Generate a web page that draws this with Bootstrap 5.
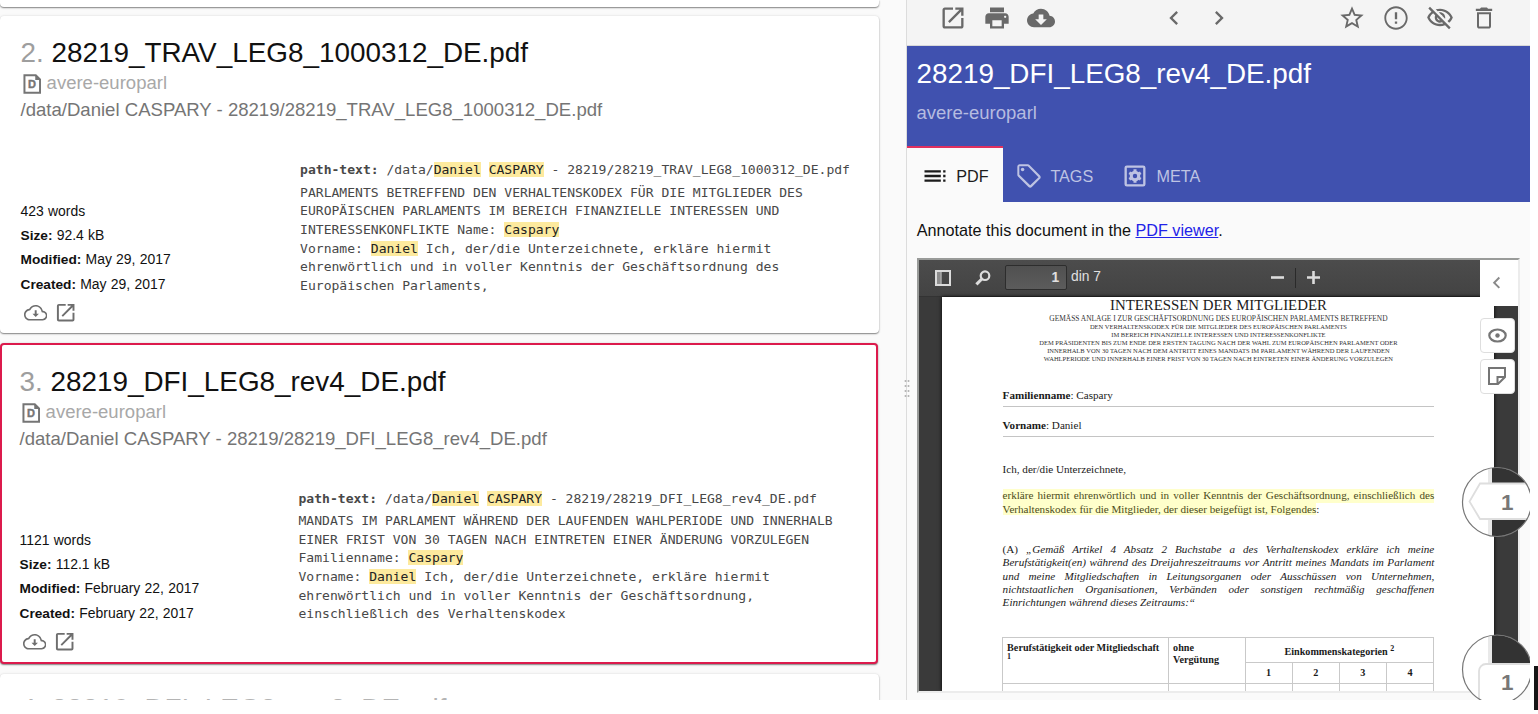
<!DOCTYPE html>
<html lang="en">
<head>
<meta charset="utf-8">
<title>28219_DFI_LEG8_rev4_DE.pdf</title>
<link href="https://cdn.jsdelivr.net/npm/bootstrap@5.3.0/dist/css/bootstrap.min.css" rel="stylesheet">
<style>
body{margin:0;background:#fff;color:#111;font-family:"Liberation Sans",Arial,sans-serif;overflow:hidden;height:714px}
.app{width:1530px;height:700px;background:#fafafa}
.ico{width:28px;height:28px;fill:currentColor;flex:none;display:block}
.ico-sm{width:23.4px;height:23.4px}
/* results */
.results{width:905.5px;height:700px}
.result{width:878.5px;border:0;border-radius:4px;background:#fff;box-shadow:0 1px 1.5px rgba(0,0,0,.45),0 0 3px rgba(0,0,0,.1);padding:20.7px 0 0 20.5px;flex:none}
.result.r-first{height:6.5px;padding:0;border-radius:0 0 4px 4px}
.result.r-second{margin-top:9.5px;height:316.5px}
.result.r-third{margin-top:10.5px;width:878px;height:321px;border:2px solid #dc1a4c;padding:20.5px 0 0 17.5px}
.result.r-fourth{margin-top:9.5px;height:80px;padding-top:19.5px}
.r-title{font-size:27.86px;line-height:32px;margin:0;font-weight:400;color:#111;white-space:nowrap}
.r-title .num{color:#9e9e9e;display:inline-block;width:31px}
.r-fourth .r-title,.r-fourth .r-title .num{color:#b4b4b4}
.r-coll{font-size:18.53px;line-height:27px;color:#a8a8a8;gap:5.6px}
.r-coll svg{margin-left:2px}
.r-path{font-size:18.57px;line-height:27px;color:#757575;white-space:nowrap}
.r-meta{width:279.6px;padding-top:76px;font-size:13.95px;line-height:24.4px}
.r-meta .line{height:24.4px;word-spacing:.35px;white-space:nowrap}
.r-meta b{font-size:13.7px}
.r-icons{color:#6e6e6e;padding:5.2px 0 0 3.3px;gap:6.9px}
.r-snip{padding-top:37.6px;font:13.05px/18.6px "DejaVu Sans Mono",monospace;color:#484848;white-space:nowrap}
.r-snip .first{line-height:19px;margin-bottom:4.5px}
.r-snip mark{padding:0;background:#fdea9e;color:#222}
.r-third .r-meta{width:279px}
.r-third .r-snip{padding-top:37.2px}
/* splitter */
.splitter{width:1.5px;background:#dcdcdc;position:relative}
.splitter svg{position:absolute;left:-2px;top:379px}
/* preview */
.tools{height:45.5px;background:#f4f4f4;color:#696969;padding:0 31.6px 9px;border-bottom:1px solid #d8d8d8}
.tools>div{gap:16.3px}
.doc-head{height:156.5px;background:#4051af;color:#fff}
.doc-head h2{font-size:27.83px;line-height:32px;margin:0;padding:12.6px 0 0 9.5px;font-weight:400}
.doc-head .sub{font-size:18.53px;line-height:28px;padding:9.2px 0 0 9.5px;color:#b6bce0;height:55.6px}
.tabs .tab{height:56.3px;font-size:16.2px;color:#bec3e3;gap:7.2px;padding-bottom:0;padding-top:4px}
.tabs .active{width:96.2px;background:#fafafa;border-top:2px solid #e0305f;color:#1c1c1c;padding-left:14px;padding-top:2px}
.note{font-size:16.19px;line-height:24px;padding:16.4px 0 0 9.8px;height:55.7px;white-space:nowrap}
.note a{color:#2222e8;text-decoration:underline}
.frame{margin-left:9.6px;width:603px;height:435px;border:2px solid;border-color:#999b99 #ececec #ececec #999b99;background:#3a3a3a;position:relative;overflow:hidden}
.vbar{height:37px;background:linear-gradient(#4c4c4c,#434343);border-bottom:1px solid #333;color:#e0e0e0;font-size:13.8px}
.vbar .pg{width:62px;height:25px;border:1px solid #2d2d2d;border-radius:2px;background:linear-gradient(#505050,#5c5c5c);margin-left:14.5px;padding-right:7px;font-weight:700;line-height:23px;text-align:right}
.vbar .sep{width:1px;height:20px;background:#2a2a2a}
.paper{margin-left:23px;width:552.7px;height:394px;background:#fff;padding:0 60px 0 61px;font-family:"Liberation Serif",serif;color:#1a1a1a;font-size:11.12px;line-height:13.4px;box-shadow:0 0 4px #000;overflow:hidden}
.paper .heading{font-size:14.85px;line-height:16px;padding-top:.4px}
.paper .caps{font-size:6.5px;line-height:7.92px;color:#333;white-space:nowrap}
.paper .caps .big{font-size:7.43px}
.ruled{border-bottom:1.5px solid #c4c4c4}
.spread{text-align-last:justify;white-space:nowrap}
.hl{background:#ffffcb;color:#4c4c20}
.grid-t{width:432px;margin:27px 0 0 -.5px;border-collapse:collapse;font-size:10.17px;line-height:12px;font-weight:700;table-layout:fixed}
.grid-t td{border:1px solid #c9c9c9;padding:4px 4px 0;vertical-align:top}
.grid-t sup{font-size:8px;line-height:0}
.side-tab{position:absolute;left:561px;top:0;width:38px;height:46px;background:#fff;color:#8a8a8a;padding-right:3px}
.side-btn{position:absolute;left:561px;width:35px;height:35px;background:#fff;border:1px solid #dedede;border-radius:4px;color:#757575}
.bucket{position:absolute;left:1460px;width:70px}
.edge{position:absolute;left:1534px;top:666px;width:4px;height:44px;background:#161616}
</style>
</head>
<body>
<svg width="0" height="0" class="position-absolute">
<symbol id="open" viewBox="0 0 24 24"><path d="M19 19H5V5h7V3H5c-1.11 0-2 .9-2 2v14c0 1.1.89 2 2 2h14c1.1 0 2-.9 2-2v-7h-2v7zM14 3v2h3.59l-9.83 9.83 1.41 1.41L19 6.41V10h2V3h-7z"/></symbol>
<symbol id="cloud" viewBox="0 0 24 24"><path d="M19.35 10.04C18.67 6.59 15.64 4 12 4 9.11 4 6.6 5.64 5.35 8.04 2.34 8.36 0 10.91 0 14c0 3.31 2.69 6 6 6h13c2.76 0 5-2.24 5-5 0-2.64-2.05-4.78-4.65-4.96zM17 13l-5 5-5-5h3V9h4v4h3z"/></symbol>
<symbol id="cloud-o" viewBox="0 0 24 24"><path fill-rule="evenodd" d="M19.35 10.04C18.67 6.59 15.64 4 12 4 9.11 4 6.6 5.64 5.35 8.04 2.34 8.36 0 10.91 0 14c0 3.31 2.69 6 6 6h13c2.76 0 5-2.24 5-5 0-2.64-2.05-4.78-4.65-4.96zM19 18.400H6c-2.400 0-4.400-1.900-4.400-4.400 0-2.200 1.600-4 3.900-4.300l.9-.1.5-.95C7.900 6.900 9.900 5.600 12 5.600c2.800 0 5.200 2 5.800 4.700l.3 1.300 1.300.1c1.700.1 3 1.500 3 3.300 0 1.900-1.500 3.400-3.400 3.400z"/><path d="M13 9.500h-2v3.500H8.700L12 16.500l3.300-3.500H13z"/></symbol>
<symbol id="print" viewBox="0 0 24 24"><path d="M19 8H5c-1.660 0-3 1.340-3 3v6h4v4h12v-4h4v-6c0-1.660-1.340-3-3-3zm-3 11H8v-5h8v5zm3-7c-.55 0-1-.45-1-1s.45-1 1-1 1 .45 1 1-.45 1-1 1zm-1-9H6v4h12V3z"/></symbol>
<symbol id="left" viewBox="0 0 24 24"><path d="M15.410 7.410L14 6l-6 6 6 6 1.410-1.410L10.830 12z"/></symbol>
<symbol id="right" viewBox="0 0 24 24"><path d="M10 6L8.590 7.410 13.170 12l-4.580 4.590L10 18l6-6z"/></symbol>
<symbol id="file-d" viewBox="0 0 18 20"><path d="M1.200 1.200H12.500L16.800 5.500V18.800H1.200Z" fill="none" stroke="currentColor" stroke-width="2"/><path d="M12 1v5h5z"/><text x="4.700" y="14" font-family="Liberation Sans" font-weight="700" font-size="11" stroke="currentColor" stroke-width=".4">D</text></symbol>
</svg>

<div class="app d-flex overflow-hidden position-relative">
  <section class="results d-flex flex-column overflow-hidden">
    <article class="result r-first"></article>

    <article class="result r-second">
      <h2 class="r-title"><span class="num">2.</span>28219_TRAV_LEG8_1000312_DE.pdf</h2>
      <div class="r-coll d-flex align-items-center"><svg class="mt-1" width="18.500" height="20" fill="currentColor" color="#757575"><use href="#file-d"/></svg>avere-europarl</div>
      <div class="r-path">/data/Daniel CASPARY - 28219/28219_TRAV_LEG8_1000312_DE.pdf</div>
      <div class="d-flex">
        <div class="r-meta">
          <div class="line">423 words</div>
          <div class="line"><b>Size:</b> 92.4 kB</div>
          <div class="line"><b>Modified:</b> May 29, 2017</div>
          <div class="line"><b>Created:</b> May 29, 2017</div>
          <div class="r-icons d-flex"><svg class="ico ico-sm"><use href="#cloud-o"/></svg><svg class="ico ico-sm"><use href="#open"/></svg></div>
        </div>
        <div class="r-snip">
          <div class="first"><b>path-text:</b> /data/<mark>Daniel</mark> <mark>CASPARY</mark> - 28219/28219_TRAV_LEG8_1000312_DE.pdf</div>
          <div>PARLAMENTS BETREFFEND DEN VERHALTENSKODEX FÜR DIE MITGLIEDER DES</div>
          <div>EUROPÄISCHEN PARLAMENTS IM BEREICH FINANZIELLE INTERESSEN UND</div>
          <div>INTERESSENKONFLIKTE Name: <mark>Caspary</mark></div>
          <div>Vorname: <mark>Daniel</mark> Ich, der/die Unterzeichnete, erkläre hiermit</div>
          <div>ehrenwörtlich und in voller Kenntnis der Geschäftsordnung des</div>
          <div>Europäischen Parlaments,</div>
        </div>
      </div>
    </article>

    <article class="result r-third">
      <h2 class="r-title"><span class="num">3.</span>28219_DFI_LEG8_rev4_DE.pdf</h2>
      <div class="r-coll d-flex align-items-center"><svg class="mt-1" width="18.500" height="20" fill="currentColor" color="#757575"><use href="#file-d"/></svg>avere-europarl</div>
      <div class="r-path">/data/Daniel CASPARY - 28219/28219_DFI_LEG8_rev4_DE.pdf</div>
      <div class="d-flex">
        <div class="r-meta">
          <div class="line">1121 words</div>
          <div class="line"><b>Size:</b> 112.1 kB</div>
          <div class="line"><b>Modified:</b> February 22, 2017</div>
          <div class="line"><b>Created:</b> February 22, 2017</div>
          <div class="r-icons d-flex"><svg class="ico ico-sm"><use href="#cloud-o"/></svg><svg class="ico ico-sm"><use href="#open"/></svg></div>
        </div>
        <div class="r-snip">
          <div class="first"><b>path-text:</b> /data/<mark>Daniel</mark> <mark>CASPARY</mark> - 28219/28219_DFI_LEG8_rev4_DE.pdf</div>
          <div>MANDATS IM PARLAMENT WÄHREND DER LAUFENDEN WAHLPERIODE UND INNERHALB</div>
          <div>EINER FRIST VON 30 TAGEN NACH EINTRETEN EINER ÄNDERUNG VORZULEGEN</div>
          <div>Familienname: <mark>Caspary</mark></div>
          <div>Vorname: <mark>Daniel</mark> Ich, der/die Unterzeichnete, erkläre hiermit</div>
          <div>ehrenwörtlich und in voller Kenntnis der Geschäftsordnung,</div>
          <div>einschließlich des Verhaltenskodex</div>
        </div>
      </div>
    </article>

    <article class="result r-fourth">
      <h2 class="r-title"><span class="num">4.</span>28219_DFI_LEG8_rev3_DE.pdf</h2>
    </article>
  </section>

  <div class="splitter"><svg width="6" height="20" fill="#b0b0b0"><g id="dots"><circle cx="1.500" cy="2" r="1"/><circle cx="1.500" cy="7" r="1"/><circle cx="1.500" cy="12" r="1"/><circle cx="1.500" cy="17" r="1"/></g><use href="#dots" x="3"/></svg></div>

  <section class="flex-grow-1">
    <div class="tools d-flex justify-content-between align-items-center">
      <div class="d-flex"><svg class="ico"><use href="#open"/></svg><svg class="ico"><use href="#print"/></svg><svg class="ico"><use href="#cloud"/></svg></div>
      <div class="d-flex"><svg class="ico"><use href="#left"/></svg><svg class="ico"><use href="#right"/></svg></div>
      <div class="d-flex">
        <svg class="ico" viewBox="0 0 24 24"><path d="M22 9.240l-7.190-.62L12 2 9.190 8.630 2 9.240l5.460 4.730L5.820 21 12 17.270 18.180 21l-1.630-7.030L22 9.240zM12 15.400l-3.760 2.270 1-4.280-3.320-2.880 4.380-.38L12 6.100l1.710 4.040 4.380.38-3.320 2.880 1 4.280L12 15.400z"/></svg>
        <svg class="ico" viewBox="0 0 24 24"><path d="M11 15h2v2h-2zm0-8h2v6h-2zm.99-5C6.470 2 2 6.480 2 12s4.470 10 9.990 10C17.520 22 22 17.520 22 12S17.520 2 11.990 2zM12 20.400c-4.600 0-8.400-3.800-8.400-8.400s3.800-8.400 8.400-8.400 8.400 3.800 8.400 8.400-3.800 8.400-8.400 8.400z"/></svg>
        <svg class="ico" viewBox="0 0 24 24"><path d="M12 6c3.790 0 7.170 2.130 8.820 5.500-.59 1.220-1.420 2.270-2.410 3.120l1.410 1.410c1.390-1.230 2.490-2.770 3.180-4.530C21.270 7.110 17 4 12 4c-1.270 0-2.490.2-3.640.57l1.650 1.650C10.660 6.090 11.320 6 12 6zm-1.070 1.140L13 9.210c.57.25 1.030.71 1.280 1.280l2.070 2.070c.08-.34.14-.7.14-1.070C16.500 9.010 14.480 7 12 7c-.37 0-.72.05-1.070.14zM2.010 3.870l2.680 2.680C3.060 7.830 1.770 9.530 1 11.500 2.730 15.890 7 19 12 19c1.520 0 2.980-.29 4.320-.82l3.420 3.420 1.410-1.410L3.420 2.450 2.010 3.870zm7.500 7.500l2.610 2.610c-.04.01-.08.02-.12.02-1.380 0-2.500-1.120-2.500-2.500 0-.05.01-.08.01-.13zm-3.400-3.400l1.750 1.750c-.23.55-.36 1.150-.36 1.780 0 2.480 2.020 4.500 4.500 4.500.63 0 1.230-.13 1.770-.36l.98.98c-.88.24-1.800.38-2.750.38-3.790 0-7.170-2.130-8.820-5.500.7-1.430 1.720-2.610 2.930-3.530z"/></svg>
        <svg class="ico" viewBox="0 0 24 24"><path d="M6 19c0 1.100.9 2 2 2h8c1.100 0 2-.9 2-2V7H6v12zM7.700 8.700h8.600v10.600H7.700V8.700zm7.800-4.700l-1-1h-5l-1 1H5v2h14V4z"/></svg>
      </div>
    </div>

    <header class="doc-head">
      <h2>28219_DFI_LEG8_rev4_DE.pdf</h2>
      <div class="sub">avere-europarl</div>
      <nav class="tabs d-flex">
        <div class="tab active d-flex align-items-center"><svg class="ico" viewBox="0 0 24 24"><path d="M3 9h14V7H3v2zm0 4h14v-2H3v2zm0 4h14v-2H3v2zm16 0h2v-2h-2v2zm0-10v2h2V7h-2zm0 6h2v-2h-2v2z"/></svg>PDF</div>
        <div class="tab d-flex align-items-center ms-1 ps-2"><svg class="ico" viewBox="0 0 24 24"><path d="M21.410 11.580l-9-9C12.050 2.220 11.550 2 11 2H4c-1.100 0-2 .9-2 2v7c0 .55.22 1.050.59 1.420l9 9c.36.36.86.58 1.410.58s1.050-.22 1.410-.59l7-7c.37-.36.59-.86.59-1.410s-.23-1.060-.59-1.420zM13 20.010L3.700 11V3.700h7.300l9.200 9.300-7.200 7.010z"/><circle cx="6.500" cy="6.500" r="1.500"/></svg>TAGS</div>
        <div class="tab d-flex align-items-center ms-4 ps-1"><svg class="ico" viewBox="0 0 24 24"><rect x="4" y="4" width="16" height="16" rx="1" fill="none" stroke="currentColor" stroke-width="2"/><circle cx="12" cy="12" r="3.200" fill="none" stroke="currentColor" stroke-width="2.600"/><path d="M12 6.300V8.300M12 15.700V17.700M7.100 9.200L8.800 10.200M15.200 13.800L16.900 14.800M7.100 14.800L8.800 13.800M15.200 10.200L16.900 9.200" stroke="currentColor" stroke-width="2.600"/></svg>META</div>
      </nav>
    </header>

    <div class="note">Annotate this document in the <a href="#">PDF viewer</a>.</div>

    <div class="frame">
      <div class="vbar d-flex align-items-center">
        <svg width="16" height="16" class="ms-3 flex-shrink-0" style="margin-right:24px"><rect x="1" y="1" width="14" height="14" fill="none" stroke="#dcdcdc" stroke-width="2"/><rect x="2" y="2" width="3.500" height="12" fill="#8d8d8d"/><path d="M6 1v14" stroke="#dcdcdc" stroke-width="1"/></svg>
        <svg width="16" height="16" class="flex-shrink-0" fill="none" stroke="#dcdcdc"><circle cx="10" cy="5.700" r="4.300" stroke-width="2.200"/><path d="M6.800 9L1.400 14.400" stroke-width="3"/></svg>
        <div class="pg">1</div>
        <div class="ps-1">din 7</div>
        <div class="d-flex align-items-center" style="margin-left:170px;gap:11px">
          <svg width="13" height="13"><path d="M0 6.500H13" stroke="#dcdcdc" stroke-width="2.600"/></svg>
          <span class="sep"></span>
          <svg width="13" height="13"><path d="M0 6.500H13M6.500 0V13" stroke="#dcdcdc" stroke-width="2.600"/></svg>
        </div>
      </div>

      <div class="paper">
        <div class="heading text-center">INTERESSEN DER MITGLIEDER</div>
        <div class="caps text-center" style="margin-top:2px">
          <div class="big">GEMÄSS ANLAGE I ZUR GESCHÄFTSORDNUNG DES EUROPÄISCHEN PARLAMENTS BETREFFEND</div>
          <div>DEN VERHALTENSKODEX FÜR DIE MITGLIEDER DES EUROPÄISCHEN PARLAMENTS</div>
          <div>IM BEREICH FINANZIELLE INTERESSEN UND INTERESSENKONFLIKTE</div>
          <div>DEM PRÄSIDENTEN BIS ZUM ENDE DER ERSTEN TAGUNG NACH DER WAHL ZUM EUROPÄISCHEN PARLAMENT ODER</div>
          <div>INNERHALB VON 30 TAGEN NACH DEM ANTRITT EINES MANDATS IM PARLAMENT WÄHREND DER LAUFENDEN</div>
          <div>WAHLPERIODE UND INNERHALB EINER FRIST VON 30 TAGEN NACH EINTRETEN EINER ÄNDERUNG VORZULEGEN</div>
        </div>
        <div class="ruled" style="margin-top:26.500px;height:17.500px"><b>Familienname</b>: Caspary</div>
        <div class="ruled" style="margin-top:12.500px;height:17.500px"><b>Vorname</b>: Daniel</div>
        <div style="margin-top:26px">Ich, der/die Unterzeichnete,</div>
        <div class="spread hl" style="margin-top:13.300px">erkläre hiermit ehrenwörtlich und in voller Kenntnis der Geschäftsordnung, einschließlich des</div>
        <div><span class="hl">Verhaltenskodex für die Mitglieder, der dieser beigefügt ist, Folgendes</span>:</div>
        <div class="spread" style="margin-top:26.600px">(A) <i>„Gemäß Artikel 4 Absatz 2 Buchstabe a des Verhaltenskodex erkläre ich meine</i></div>
        <div class="spread fst-italic">Berufstätigkeit(en) während des Dreijahreszeitraums vor Antritt meines Mandats im Parlament</div>
        <div class="spread fst-italic">und meine Mitgliedschaften in Leitungsorganen oder Ausschüssen von Unternehmen,</div>
        <div class="spread fst-italic">nichtstaatlichen Organisationen, Verbänden oder sonstigen rechtmäßig geschaffenen</div>
        <div class="fst-italic">Einrichtungen während dieses Zeitraums:“</div>
        <table class="grid-t">
          <colgroup><col style="width:166px"><col style="width:76.500px"><col><col><col><col></colgroup>
          <tr style="height:25px"><td rowspan="2" class="text-nowrap">Berufstätigkeit oder Mitgliedschaft<br><sup>1</sup></td><td rowspan="2">ohne<br>Vergütung</td><td colspan="4" class="text-center align-middle">Einkommenskategorien <sup>2</sup></td></tr>
          <tr class="text-center" style="height:21.500px"><td>1</td><td>2</td><td>3</td><td>4</td></tr>
          <tr style="height:20px"><td></td><td></td><td></td><td></td><td></td><td></td></tr>
        </table>
      </div>

      <div class="side-tab d-flex align-items-center justify-content-center"><svg class="ico ico-sm"><use href="#left"/></svg></div>
      <div class="side-btn d-flex align-items-center justify-content-center" style="top:58px"><svg width="19" height="15" fill="none" stroke="currentColor" stroke-width="2.200"><ellipse cx="9.500" cy="7.500" rx="8.200" ry="6"/><circle cx="9.500" cy="7.500" r="2.200" fill="currentColor" stroke="none"/></svg></div>
      <div class="side-btn d-flex align-items-center justify-content-center" style="top:99px"><svg width="18" height="18" fill="none" stroke="currentColor" stroke-width="2"><path d="M1 1H17V10L10 17H1ZM17 10H9.500V17"/></svg></div>
    </div>
  </section>

  <svg class="bucket" style="top:465px" width="70" height="74">
    <clipPath id="c1"><circle cx="37" cy="37" r="34.500"/></clipPath>
    <circle cx="37" cy="37" r="34.500" fill="#fff"/>
    <g clip-path="url(#c1)"><path d="M28 0h4v74h-4z" fill="#e9e9e9"/><path d="M32 0h40v74H32z" fill="#333"/><path d="M80 18.500H20L9.500 36.500 20 54H80z" fill="#fff" stroke="#dedede" stroke-width="1.800"/></g>
    <circle cx="37" cy="37" r="34.500" fill="none" stroke="#777" stroke-width="1.200"/>
    <text x="41" y="45" font-family="Liberation Sans" font-size="22.500" font-weight="700" fill="#777">1</text>
  </svg>
  <svg class="bucket" style="top:632px" width="70" height="68">
    <clipPath id="c2"><circle cx="37" cy="37.500" r="34.500"/></clipPath>
    <circle cx="37" cy="37.500" r="34.500" fill="#fff"/>
    <g clip-path="url(#c2)"><path d="M28 0h4v74h-4z" fill="#e9e9e9"/><path d="M32 0h40v74H32z" fill="#333"/><rect x="19" y="32" width="70" height="60" rx="7" fill="#fff" stroke="#dedede" stroke-width="1.800"/></g>
    <circle cx="37" cy="37.500" r="34.500" fill="none" stroke="#777" stroke-width="1.200"/>
    <text x="41" y="58" font-family="Liberation Sans" font-size="22.500" font-weight="700" fill="#777">1</text>
  </svg>
</div>
<div class="edge"></div>
<script src="https://cdn.jsdelivr.net/npm/bootstrap@5.3.0/dist/js/bootstrap.bundle.min.js"></script>
</body>
</html>
